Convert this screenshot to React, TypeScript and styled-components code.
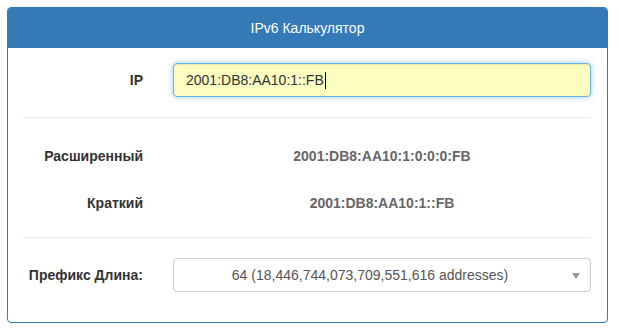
import { Fragment } from 'react'
import styled, { createGlobalStyle } from 'styled-components'

const GlobalStyle = createGlobalStyle`
  * {
    box-sizing: border-box;
  }

  body {
    margin: 0;
    background-color: #ffffff;
    font-family: 'Liberation Sans', Arial, sans-serif;
    font-size: 14px;
    color: #333333;
  }
`

const Pagina = styled.div`
  padding: 7px 11px 12px 7px;
`

const Painel = styled.section`
  border: 1px solid #337ab7;
  border-radius: 4px;
  background-color: #ffffff;
`

const Cabecalho = styled.header`
  height: 40px;
  display: flex;
  align-items: center;
  justify-content: center;
  background-color: #337ab7;
  color: #ffffff;
  font-size: 14px;
  border-radius: 3px 3px 0 0;
`

const Corpo = styled.div`
  padding: 15px 16px 15px 15px;
`

const Linha = styled.div<{ $mb?: number }>`
  display: grid;
  grid-template-columns: 150px 1fr;
  align-items: center;
  min-height: 34px;
  margin-bottom: ${props => props.$mb ?? 0}px;
`

const Rotulo = styled.label`
  text-align: right;
  padding-right: 30px;
  font-weight: bold;
  color: #333333;
`

const Campo = styled.div`
  height: 34px;
  display: flex;
  align-items: center;
  padding: 0 12px;
  background-color: #fbfdc1;
  border: 1px solid #66afe9;
  border-radius: 4px;
  box-shadow: inset 0 1px 1px rgba(0, 0, 0, 0.075), 0 0 6px rgba(102, 175, 233, 0.6);
  color: #333333;
`

const Cursor = styled.span`
  display: inline-block;
  width: 1px;
  height: 17px;
  margin-left: 1px;
  background-color: #000000;
`

const Valor = styled.div`
  text-align: center;
  font-weight: bold;
  color: #666666;
`

const Divisor = styled.hr<{ $mt: number; $mb: number }>`
  border: 0;
  border-top: 1px solid #eeeeee;
  margin: ${props => props.$mt}px 0 ${props => props.$mb}px;
`

const Seletor = styled.div`
  position: relative;
  height: 34px;
  display: flex;
  align-items: center;
  justify-content: center;
  padding-right: 24px;
  border: 1px solid #cccccc;
  border-radius: 4px;
  background-color: #ffffff;
  color: #555555;
`

const Seta = styled.span`
  position: absolute;
  right: 10px;
  top: 14px;
  width: 0;
  height: 0;
  border-left: 4px solid transparent;
  border-right: 4px solid transparent;
  border-top: 6px solid #999999;
`

function App() {
  const ip = '2001:DB8:AA10:1::FB'
  const expandido = '2001:DB8:AA10:1:0:0:0:FB'
  const curto = '2001:DB8:AA10:1::FB'

  return (
    <Fragment>
      <GlobalStyle />
      <Pagina>
        <Painel>
          <Cabecalho>IPv6 Калькулятор</Cabecalho>
          <Corpo>
            <Linha>
              <Rotulo>IP</Rotulo>
              <Campo>
                {ip}
                <Cursor />
              </Campo>
            </Linha>

            <Divisor $mt={20} $mb={21} />

            <Linha $mb={13}>
              <Rotulo>Расширенный</Rotulo>
              <Valor>{expandido}</Valor>
            </Linha>
            <Linha>
              <Rotulo>Краткий</Rotulo>
              <Valor>{curto}</Valor>
            </Linha>

            <Divisor $mt={17} $mb={20} />

            <Linha $mb={15}>
              <Rotulo>Префикс Длина:</Rotulo>
              <Seletor>
                64 (18,446,744,073,709,551,616 addresses)
                <Seta />
              </Seletor>
            </Linha>
          </Corpo>
        </Painel>
      </Pagina>
    </Fragment>
  )
}

export default App
